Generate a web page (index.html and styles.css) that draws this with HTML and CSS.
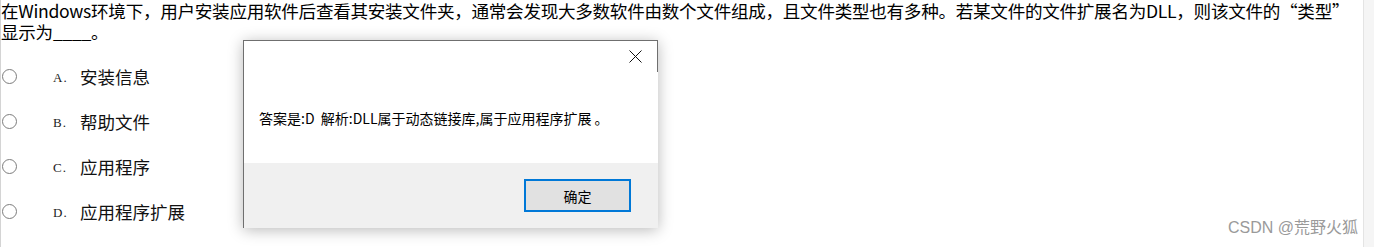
FILE: index.html
```html
<!DOCTYPE html>
<html lang="zh-CN">
<head>
    <meta charset="UTF-8">
    <meta name="viewport" content="width=device-width, initial-scale=1.0">
    <title>单选题</title>
    <link rel="stylesheet" href="styles.css">
</head>
<body>

    <div class="page">
        <div class="paper">
            <p class="question">在Windows环境下，用户安装应用软件后查看其安装文件夹，通常会发现大多数软件由数个文件组成，且文件类型也有多种。若某文件的文件扩展名为DLL，则该文件的“类型”显示为____。</p>

            <div class="options">
                <div class="option">
                    <span class="radio"></span>
                    <span class="letter">A.</span>
                    <span class="text">安装信息</span>
                </div>
                <div class="option">
                    <span class="radio"></span>
                    <span class="letter">B.</span>
                    <span class="text">帮助文件</span>
                </div>
                <div class="option">
                    <span class="radio"></span>
                    <span class="letter">C.</span>
                    <span class="text">应用程序</span>
                </div>
                <div class="option">
                    <span class="radio"></span>
                    <span class="letter">D.</span>
                    <span class="text">应用程序扩展</span>
                </div>
            </div>

            <div class="dialog">
                <div class="titlebar">
                    <svg class="close" width="13" height="13" viewBox="0 0 13 13">
                        <path d="M0.5 0.5 L12.5 12.5 M12.5 0.5 L0.5 12.5" stroke="#111" stroke-width="1" fill="none"/>
                    </svg>
                </div>
                <div class="msg">
                    <p>答案是:D&nbsp; 解析:DLL属于动态链接库,属于应用程序扩展 。</p>
                </div>
                <div class="footer">
                    <button class="ok">确定</button>
                </div>
            </div>

            <div class="watermark">CSDN @荒野火狐</div>
        </div>
        <div class="sidebar"></div>
    </div>

</body>
</html>
```

FILE: styles.css
```css
* {
    box-sizing: border-box;
}
body {
    margin: 0;
    background: #fff;
    font-family: "Noto Sans CJK SC", "Noto Sans", sans-serif;
    color: #000;
}
.page {
    display: flex;
    height: 247px;
    overflow: hidden;
}
.paper {
    position: relative;
    flex: 1;
    border-left: 1px solid #d4d4d4;
}
.sidebar {
    width: 11px;
    background: #f5f5f5;
    border-left: 1px solid #e4e4e4;
}
.question {
    margin: 0;
    font-size: 17.6px;
    letter-spacing: -0.3px;
    line-height: 21px;
}
.options {
    padding-top: 12px;
}
.option {
    display: flex;
    align-items: center;
    height: 45px;
}
.radio {
    width: 15px;
    height: 15px;
    margin-left: 1px;
    border: 1.5px solid #7c7c7c;
    border-radius: 50%;
    background: #fff;
}
.letter {
    width: 27px;
    margin-left: 36px;
    font-family: "Liberation Serif", serif;
    font-size: 13px;
    padding-top: 3px;
    letter-spacing: 1px;
    color: #222;
}
.text {
    font-size: 17.5px;
    color: #111;
}

/* message box */
.dialog {
    position: absolute;
    left: 242px;
    top: 40px;
    width: 415px;
    height: 188px;
    background: #fff;
    border-left: 1px solid #6f6f6f;
    border-top: 1px solid #6f6f6f;
    box-shadow: 0 2px 14px rgba(0, 0, 0, 0.28);
    display: flex;
    flex-direction: column;
}
.titlebar {
    height: 31px;
    display: flex;
    justify-content: flex-end;
    align-items: center;
    padding-right: 15px;
    border-right: 1px solid #6f6f6f;
}
.close {
    display: block;
}
.msg {
    height: 91px;
    display: flex;
    align-items: center;
    padding-left: 15px;
}
.msg p {
    margin: 0;
    font-size: 14px;
    color: #000;
}
.footer {
    flex: 1;
    background: #f0f0f0;
    display: flex;
    justify-content: flex-end;
    align-items: center;
    padding-right: 27px;
}
.ok {
    width: 107px;
    height: 33px;
    border: 2px solid #0078d7;
    background: #e1e1e1;
    font-family: "Noto Sans CJK SC", sans-serif;
    font-size: 14px;
    color: #000;
    padding: 0;
}

.watermark {
    position: absolute;
    right: 5px;
    bottom: 9px;
    font-family: "Liberation Sans", "Noto Sans CJK SC", sans-serif;
    font-size: 16px;
    color: #9a9a9a;
}
```
